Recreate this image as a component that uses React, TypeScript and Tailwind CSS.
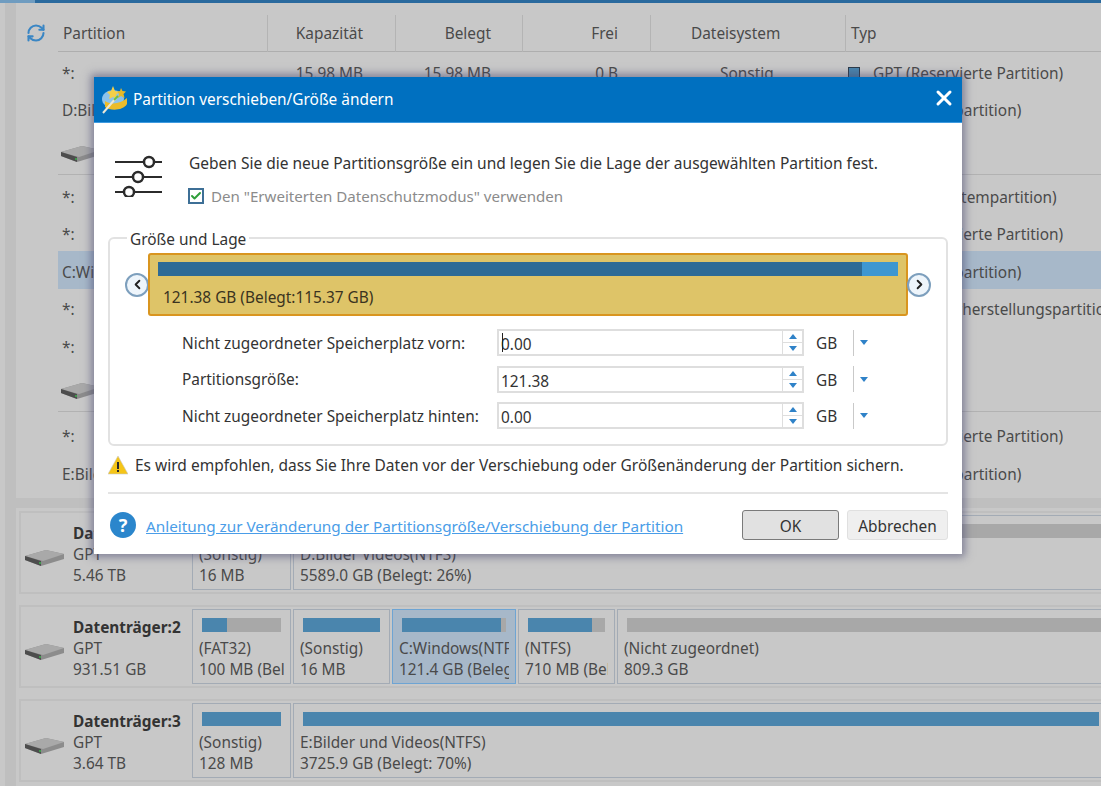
import { RefreshCw, Check, X, ChevronLeft, ChevronRight } from 'lucide-react'

const font = "font-['Noto_Sans','Open_Sans',sans-serif]"
const tableCols = 'grid grid-cols-[209px_128px_127px_128px_195px_1fr]'

type Row = { name: string; cap?: string; used?: string; free?: string; fs?: string; type: string; selected?: boolean }

const rowsA: Row[] = [
  { name: '*:', cap: '15.98 MB', used: '15.98 MB', free: '0 B', fs: 'Sonstig', type: 'GPT (Reservierte Partition)' },
  { name: 'D:Bilder Videos', cap: '5.46 TB', used: '1.42 TB', free: '4.04 TB', fs: 'NTFS', type: 'GPT (Datenpartition)' },
]
const rowsB: Row[] = [
  { name: '*:', cap: '100 MB', used: '32 MB', free: '68 MB', fs: 'FAT32', type: 'GPT (EFI-Systempartition)' },
  { name: '*:', cap: '16 MB', used: '16 MB', free: '0 B', fs: 'Sonstig', type: 'GPT (Reservierte Partition)' },
  { name: 'C:Windows', cap: '121.38 GB', used: '115.37 GB', free: '6.01 GB', fs: 'NTFS', type: 'GPT (Datenpartition)', selected: true },
  { name: '*:', cap: '710 MB', used: '600 MB', free: '110 MB', fs: 'NTFS', type: 'GPT (Wiederherstellungspartition)' },
  { name: '*:', cap: '809.3 GB', used: '0 B', free: '809.3 GB', fs: 'Nicht zugeordnet', type: 'GPT' },
]
const rowsC: Row[] = [
  { name: '*:', cap: '128 MB', used: '128 MB', free: '0 B', fs: 'Sonstig', type: 'GPT (Reservierte Partition)' },
  { name: 'E:Bilder und Videos', cap: '3.64 TB', used: '2.55 TB', free: '1.09 TB', fs: 'NTFS', type: 'GPT (Datenpartition)' },
]

function HddIcon() {
  return (
    <svg width="41" height="18" viewBox="0 0 41 18">
      <path d="M1 7 L22 1 L40 5 L40 10 L17 17 L1 11 Z" fill="#8c8c8c" />
      <path d="M1 7 L19 12 L40 5 L22 1 Z" fill="#a9a9a9" />
      <path d="M1 7 L17 12 L17 17 L1 11 Z" fill="#4d4d4d" />
      <rect x="15" y="13" width="2" height="2" fill="#3f9a4c" />
    </svg>
  )
}

function TableRow({ row }: { row: Row }) {
  return (
    <div className={`${tableCols} h-[37.5px] items-center pt-[5px] whitespace-nowrap ${row.selected ? 'bg-[#a7b8c9]' : ''}`}>
      <div className="pl-[4px] overflow-hidden">{row.name}</div>
      <div className="pr-[32px] text-right">{row.cap}</div>
      <div className="pr-[31px] text-right">{row.used}</div>
      <div className="pr-[32px] text-right">{row.free}</div>
      <div className="pl-[70px]">{row.fs}</div>
      <div className="flex items-center gap-[13px] pl-[3px]">
        <span className="w-[12px] h-[12px] border border-[#2b3a4a] bg-[#4a85ad]" />
        {row.type}
      </div>
    </div>
  )
}

function DiskRow() {
  return (
    <div className="h-[48px] border-b border-[#b2b2b2] flex items-center pl-[2px] pt-[7px]">
      <HddIcon />
    </div>
  )
}

type Block = { w: string; top: string; bottom: string; bar: string; selected?: boolean }

function PartitionBlock({ w, top, bottom, bar, selected }: Block) {
  return (
    <div className={`${w} shrink-0 border px-[6px] pt-[8px] overflow-hidden whitespace-nowrap ${selected ? 'bg-[#a7b8c9] border-[#6ea4d3]' : 'border-[#a3abb5]'}`}>
      <div className="h-[14px] mx-[3px] bg-[#a8a8a8]">
        <div className={`h-full bg-[#4a85ad] ${bar}`} />
      </div>
      <div className="mt-[6px] h-[21px] leading-[21px] overflow-hidden">{top}</div>
      <div className="h-[21px] leading-[21px] overflow-hidden">{bottom}</div>
    </div>
  )
}

function DiskCard({ name, size, blocks }: { name: string; size: string; blocks: Block[] }) {
  return (
    <div className="h-[83px] ml-[3px] border-2 border-r-0 border-[#bfbfbf] flex items-stretch py-[2px] shrink-0">
      <div className="w-[171px] shrink-0 flex">
        <div className="w-[52px] shrink-0 pl-[3px] pt-[34px]"><HddIcon /></div>
        <div className="pt-[8px] leading-[21px]">
          <div className="font-bold text-[#333]">{name}</div>
          <div>GPT</div>
          <div>{size}</div>
        </div>
      </div>
      <div className="flex gap-[2px]">
        {blocks.map((b, i) => <PartitionBlock key={i} {...b} />)}
      </div>
    </div>
  )
}

function Spin({ value, caret }: { value: string; caret?: boolean }) {
  return (
    <div className="flex items-center h-[27px]">
      <div className="w-[307px] h-[27px] border-2 border-[#dedede] flex">
        <div className="flex-1 relative pl-[2px] pt-[2px] leading-[23px] text-[#333]">
          {caret && <span className="absolute left-[3px] top-[2px] w-px h-[19px] bg-[#222]" />}
          {value}
        </div>
        <div className="w-[20px] border-l border-[#dedede] flex flex-col">
          <div className="flex-1 flex items-center justify-center border-b border-[#dedede]">
            <span className="w-0 h-0 border-x-[4.5px] border-x-transparent border-b-[5px] border-b-[#2f82c8]" />
          </div>
          <div className="flex-1 flex items-center justify-center">
            <span className="w-0 h-0 border-x-[4.5px] border-x-transparent border-t-[5px] border-t-[#2f82c8]" />
          </div>
        </div>
      </div>
      <span className="w-[49px] pl-[12px] pt-[3px] text-[#333]">GB</span>
      <span className="w-px h-[26px] bg-[#c9c9c9]" />
      <span className="ml-[6px] w-0 h-0 border-x-[4.5px] border-x-transparent border-t-[5px] border-t-[#2f82c8]" />
    </div>
  )
}

function WandIcon() {
  return (
    <svg width="27" height="29" viewBox="0 0 27 29">
      <ellipse cx="12" cy="14" rx="11" ry="9" fill="#8cc3ec" />
      <path d="M4 16 C9 20 20 19 26 13 L26 19 C22 26 9 26 4 22 Z" fill="#ecbc2a" />
      <path d="M10 6 L12 1 L14 6 L18 7 L15 10 L16 14 L12 12 L8 14 L9 10 L6 7 Z" fill="#f3cf4a" />
      <path d="M20 3 L21.5 6 L25 6.5 L22.5 9 L23.5 13 L20 11 L17 13 L18 9 L16 6.5 L19 6 Z" fill="#e6b92a" />
      <path d="M2 28 L15 13" stroke="#ece8d6" strokeWidth="2" />
      <path d="M13 15 L17 11" stroke="#6fbf44" strokeWidth="2" />
    </svg>
  )
}

function SlidersIcon() {
  return (
    <svg width="48" height="42" viewBox="0 0 48 42" fill="none" stroke="#2b2b2b" strokeWidth="2">
      <path d="M0 7H28M40 7H47" />
      <circle cx="34" cy="7" r="5" fill="#fff" strokeWidth="2.5" />
      <path d="M0 22H17M29 22H47" />
      <circle cx="23" cy="22" r="5" fill="#fff" strokeWidth="2.5" />
      <path d="M0 37H8M20 37H47" />
      <circle cx="14" cy="37" r="5" fill="#fff" strokeWidth="2.5" />
    </svg>
  )
}

function ArrowButton({ left }: { left?: boolean }) {
  return (
    <div className="w-[24px] h-[24px] rounded-full border-2 border-[#7d9fbd] bg-[#eef5fb] flex items-center justify-center shrink-0">
      {left ? <ChevronLeft size={15} strokeWidth={3} color="#222" /> : <ChevronRight size={15} strokeWidth={3} color="#222" />}
    </div>
  )
}

function Dialog() {
  return (
    <div className="absolute left-[94px] top-[77px] w-[868px] h-[477px] bg-white shadow-[0_0_8px_3px_rgba(70,70,110,0.55)] text-[#333]">
      <div className="h-[46px] bg-[#0070c0] border-b border-[#3f9be0] flex items-center pl-[7px] pr-[6px] text-white">
        <WandIcon />
        <span className="ml-[5px] flex-1">Partition verschieben/Größe ändern</span>
        <X size={24} strokeWidth={3} color="#fff" className="-mt-[4px]" />
      </div>

      <div className="px-[14px]">
        <div className="flex pl-[7px] pt-[32px] h-[115px]">
          <div className="w-[73px] shrink-0"><SlidersIcon /></div>
          <div>
            <div className="leading-[20px] -mt-[2px] ml-[1px] whitespace-nowrap text-[15.5px]">Geben Sie die neue Partitionsgröße ein und legen Sie die Lage der ausgewählten Partition fest.</div>
            <div className="flex items-center mt-[12px] text-[#8b8b8b] text-[15.1px]">
              <span className="w-[16px] h-[16px] border-2 border-[#3d6f96] flex items-center justify-center mr-[7px]">
                <Check size={12} strokeWidth={4} color="#2f9e3a" />
              </span>
              Den "Erweiterten Datenschutzmodus" verwenden
            </div>
          </div>
        </div>

        <fieldset className="h-[216px] border-2 border-[#e2e2e2] rounded-[6px] px-[15px] -mt-[8px]">
          <legend className="relative top-[2px] ml-[2px] px-[3px] leading-[16px] text-[#333]">Größe und Lage</legend>
          <div className="flex items-center mt-[7px]">
            <ArrowButton left />
            <div className="flex-1 h-[63px] -mx-[1px] bg-[#dec468] border-2 border-[#d9951f] rounded-[3px] px-[8px] pt-[7px]">
              <div className="h-[14px] bg-[#3e97d1]">
                <div className="h-full w-[95.2%] bg-[#2d6b96]" />
              </div>
              <div className="mt-[10px] ml-[5px] text-[#3a3320]">121.38 GB (Belegt:115.37 GB)</div>
            </div>
            <ArrowButton />
          </div>
          <div className="grid grid-cols-[315px_1fr] gap-y-[9.5px] items-center ml-[57px] mt-[13px]">
            <span className="pt-[3px]">Nicht zugeordneter Speicherplatz vorn:</span>
            <Spin value="0.00" caret />
            <span className="pt-[2px]">Partitionsgröße:</span>
            <Spin value="121.38" />
            <span className="pt-[2px]">Nicht zugeordneter Speicherplatz hinten:</span>
            <Spin value="0.00" />
          </div>
        </fieldset>

        <div className="flex items-center h-[20px] mt-[9px]">
          <svg width="20" height="20" viewBox="0 0 20 20">
            <path d="M10 1 L20 19 L0 19 Z" fill="#f5c518" stroke="#c9c9c9" strokeWidth="0.6" />
            <rect x="9" y="7" width="2" height="7" fill="#2a2a2a" />
            <rect x="9" y="15" width="2" height="2" fill="#2a2a2a" />
          </svg>
          <span className="ml-[7px] pt-[2px] whitespace-nowrap text-[15.5px]">Es wird empfohlen, dass Sie Ihre Daten vor der Verschiebung oder Größenänderung der Partition sichern.</span>
        </div>

        <div className="h-[2px] bg-[#e4e4e4] mt-[17px]" />

        <div className="flex items-center mt-[15px] h-[32px]">
          <div className="w-[26px] h-[26px] ml-[2px] rounded-full bg-[#2b86cc] text-white font-bold text-[18px] flex items-center justify-center">?</div>
          <a className="ml-[10px] flex-1 pt-[3px] text-[#4a9de8] underline whitespace-nowrap text-[15.3px]">Anleitung zur Veränderung der Partitionsgröße/Verschiebung der Partition</a>
          <button className="w-[97px] h-[30px] pt-[3px] bg-[#e1e1e1] border border-[#7a7a7a] rounded-[3px] text-[#333]">OK</button>
          <button className="w-[101px] h-[30px] pt-[3px] ml-[8px] bg-[#efefef] border border-[#e0e0e0] rounded-[3px] text-[#333]">Abbrechen</button>
        </div>
      </div>
    </div>
  )
}

export default function App() {
  return (
    <div className={`relative w-[1101px] h-[786px] overflow-hidden bg-[#c8c8c8] text-[#4a4a4a] text-[15.4px] ${font}`}>
      <div className="h-[3px] flex">
        <div className="w-[35px] bg-[#6f9cc0]" />
        <div className="flex-1 bg-[#2a6a9e]" />
      </div>

      <div className="flex h-[783px]">
        <div className="w-[5px] shrink-0" />
        <div className="w-[11px] shrink-0 bg-[#bfbfbf]" />

        <div className="flex-1 min-w-0 flex flex-col">
          {/* Partition table */}
          <div className="h-[495px] shrink-0 flex">
            <div className="w-[42px] shrink-0 pl-[10px] pt-[20px]">
              <RefreshCw size={20} strokeWidth={2.5} color="#3a86c4" />
            </div>
            <div className="flex-1 min-w-0">
              <div className={`${tableCols} h-[49px] pt-[12px] border-b border-[#aeaeae]`}>
                <div className="pl-[5px] pt-[1px] leading-[36px]">Partition</div>
                <div className="border-l border-[#b4b4b4] pr-[32px] pt-[1px] text-right leading-[36px]">Kapazität</div>
                <div className="border-l border-[#b4b4b4] pr-[31px] pt-[1px] text-right leading-[36px]">Belegt</div>
                <div className="border-l border-[#b4b4b4] pr-[32px] pt-[1px] text-right leading-[36px]">Frei</div>
                <div className="border-l border-[#b4b4b4] pl-[40px] pt-[1px] leading-[36px]">Dateisystem</div>
                <div className="border-l border-[#b4b4b4] pl-[5px] pt-[1px] leading-[36px]">Typ</div>
              </div>
              {rowsA.map((r, i) => <TableRow key={i} row={r} />)}
              <DiskRow />
              <div className="h-[1px]" />
              {rowsB.map((r, i) => <TableRow key={i} row={r} />)}
              <DiskRow />
              <div className="h-[4px]" />
              {rowsC.map((r, i) => <TableRow key={i} row={r} />)}
            </div>
          </div>

          <div className="h-[10px] shrink-0 bg-[#bfbfbf]" />

          {/* Disk map */}
          <div className="pt-[3px] flex flex-col gap-[11px]">
            <DiskCard
              name="Datenträger:1"
              size="5.46 TB"
              blocks={[
                { w: 'w-[99px]', top: '(Sonstig)', bottom: '16 MB', bar: 'w-full' },
                { w: 'w-[900px]', top: 'D:Bilder Videos(NTFS)', bottom: '5589.0 GB (Belegt: 26%)', bar: 'w-[26%]' },
              ]}
            />
            <DiskCard
              name="Datenträger:2"
              size="931.51 GB"
              blocks={[
                { w: 'w-[99px]', top: '(FAT32)', bottom: '100 MB (Belegt: 32%)', bar: 'w-[32%]' },
                { w: 'w-[97px]', top: '(Sonstig)', bottom: '16 MB', bar: 'w-full' },
                { w: 'w-[124px]', top: 'C:Windows(NTFS)', bottom: '121.4 GB (Belegt: 95%)', bar: 'w-[95%]', selected: true },
                { w: 'w-[97px]', top: '(NTFS)', bottom: '710 MB (Belegt: 85%)', bar: 'w-[83%]' },
                { w: 'w-[500px]', top: '(Nicht zugeordnet)', bottom: '809.3 GB', bar: 'w-0' },
              ]}
            />
            <DiskCard
              name="Datenträger:3"
              size="3.64 TB"
              blocks={[
                { w: 'w-[99px]', top: '(Sonstig)', bottom: '128 MB', bar: 'w-full' },
                { w: 'w-[816px]', top: 'E:Bilder und Videos(NTFS)', bottom: '3725.9 GB (Belegt: 70%)', bar: 'w-full' },
              ]}
            />
          </div>
        </div>
      </div>

      <Dialog />
    </div>
  )
}
